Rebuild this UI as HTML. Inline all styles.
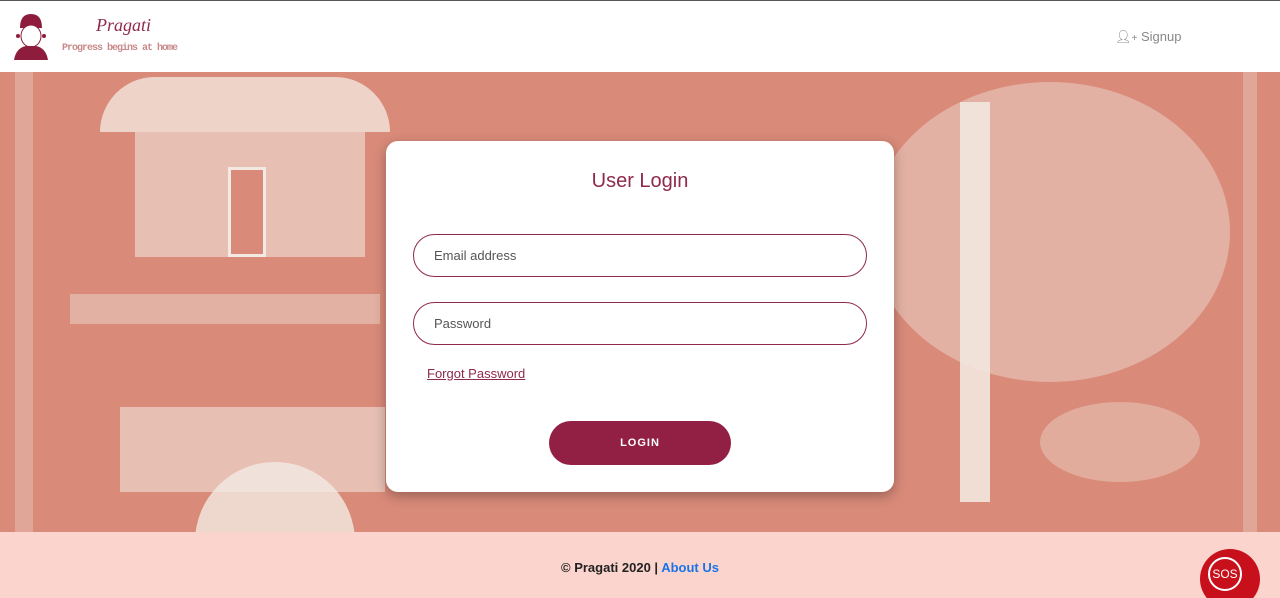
<!DOCTYPE html>
<html><head><meta charset="utf-8"><style>
*{margin:0;padding:0;box-sizing:border-box}
body{width:1280px;height:598px;overflow:hidden;font-family:"Liberation Sans",sans-serif;background:#fff;position:relative}
.top{position:absolute;top:0;left:0;width:1280px;height:1px;background:#555}
.hdr{position:absolute;top:1px;left:0;width:1280px;height:71px;background:#fff}
.ban{position:absolute;top:72px;left:0;width:1280px;height:460px;background:#d98a79;overflow:hidden}
.foot{position:absolute;top:532px;left:0;width:1280px;height:66px;background:#fbd5cd;overflow:hidden}
.w{position:absolute;background:#f3ebe3}
.card{position:absolute;left:386px;top:141px;width:508px;height:351px;background:#fff;border-radius:12px;box-shadow:0 4px 12px rgba(0,0,0,.3)}
.inp{position:absolute;left:27px;width:454px;height:43px;border:1.5px solid #8e2a4c;border-radius:22px;font-size:13px;color:#555;padding:13px 0 0 20px}
</style></head><body>
<div class="top"></div>
<div class="hdr">
<svg style="position:absolute;left:12px;top:11px" width="38" height="50" viewBox="0 0 38 50">
<path d="M8 16 Q8 2 19 2 Q30 2 30 16 Z" fill="#8e1c3c"/>
<ellipse cx="19" cy="24" rx="10" ry="11" fill="#fff" stroke="#8e1c3c" stroke-width="1"/>
<circle cx="6" cy="24" r="2" fill="#8e1c3c"/><circle cx="32" cy="24" r="2" fill="#8e1c3c"/>
<path d="M2 48 Q4 36 14 34 L24 34 Q34 36 36 48 Z" fill="#8e1c3c"/>
</svg>
<div style="position:absolute;left:96px;top:14px;font-family:'Liberation Serif',serif;font-style:italic;font-size:18px;color:#8e2a4c">Pragati</div>
<div style="position:absolute;left:62px;top:42px;font-size:10px;font-weight:bold;color:#c98a8a;font-family:'Liberation Mono',monospace;letter-spacing:-1px">Progress begins at home</div>
<div style="position:absolute;left:1115px;top:28px;font-size:13px;color:#888">&#x1F464;&#xFE0E;<span style="font-size:10px">+</span> Signup</div>
</div>
<div class="ban">
<div class="w" style="left:100px;top:5px;width:290px;height:55px;border-radius:140px 140px 0 0;opacity:.75"></div>
<div class="w" style="left:135px;top:60px;width:230px;height:125px;opacity:.55"></div>
<div class="w" style="left:228px;top:95px;width:38px;height:90px;background:#d98a79;border:3px solid #f3ebe3"></div>
<div class="w" style="left:70px;top:222px;width:310px;height:30px;opacity:.4"></div>
<div class="w" style="left:120px;top:335px;width:265px;height:85px;opacity:.55"></div>
<div class="w" style="left:195px;top:390px;width:160px;height:80px;border-radius:80px 80px 0 0;opacity:.8"></div>
<div class="w" style="left:960px;top:30px;width:30px;height:400px;opacity:.85"></div>
<div class="w" style="left:870px;top:10px;width:360px;height:300px;border-radius:50%;opacity:.4"></div>
<div class="w" style="left:1040px;top:330px;width:160px;height:80px;border-radius:50%;opacity:.35"></div>
<div class="w" style="left:15px;top:0;width:18px;height:460px;opacity:.3"></div>
<div class="w" style="left:1243px;top:0;width:14px;height:460px;opacity:.3"></div>
</div>
<div class="card">
<div style="position:absolute;top:29px;width:100%;text-align:center;font-size:20px;color:#8e2a4c">User Login</div>
<div class="inp" style="top:93px">Email address</div>
<div class="inp" style="top:161px">Password</div>
<div style="position:absolute;left:41px;top:225px;font-size:13px;color:#8e2a4c;text-decoration:underline">Forgot Password</div>
<div style="position:absolute;left:163px;top:280px;width:182px;height:44px;border-radius:22px;background:#921f44;color:#fff;font-size:11px;font-weight:bold;letter-spacing:1px;text-align:center;line-height:44px">LOGIN</div>
</div>
<div class="foot">
<div style="position:absolute;top:28px;width:100%;text-align:center;font-size:13px;font-weight:bold;color:#222">© Pragati 2020 | <span style="color:#1a73e8">About Us</span></div>
<div style="position:absolute;left:1200px;top:17px;width:60px;height:60px;border-radius:50%;background:#c8101c">
<div style="position:absolute;left:8px;top:8px;width:34px;height:34px;border:2px solid #fff;border-radius:50%;color:#fff;font-size:12px;line-height:30px;text-align:center">SOS</div></div>
</div>
</body></html>
